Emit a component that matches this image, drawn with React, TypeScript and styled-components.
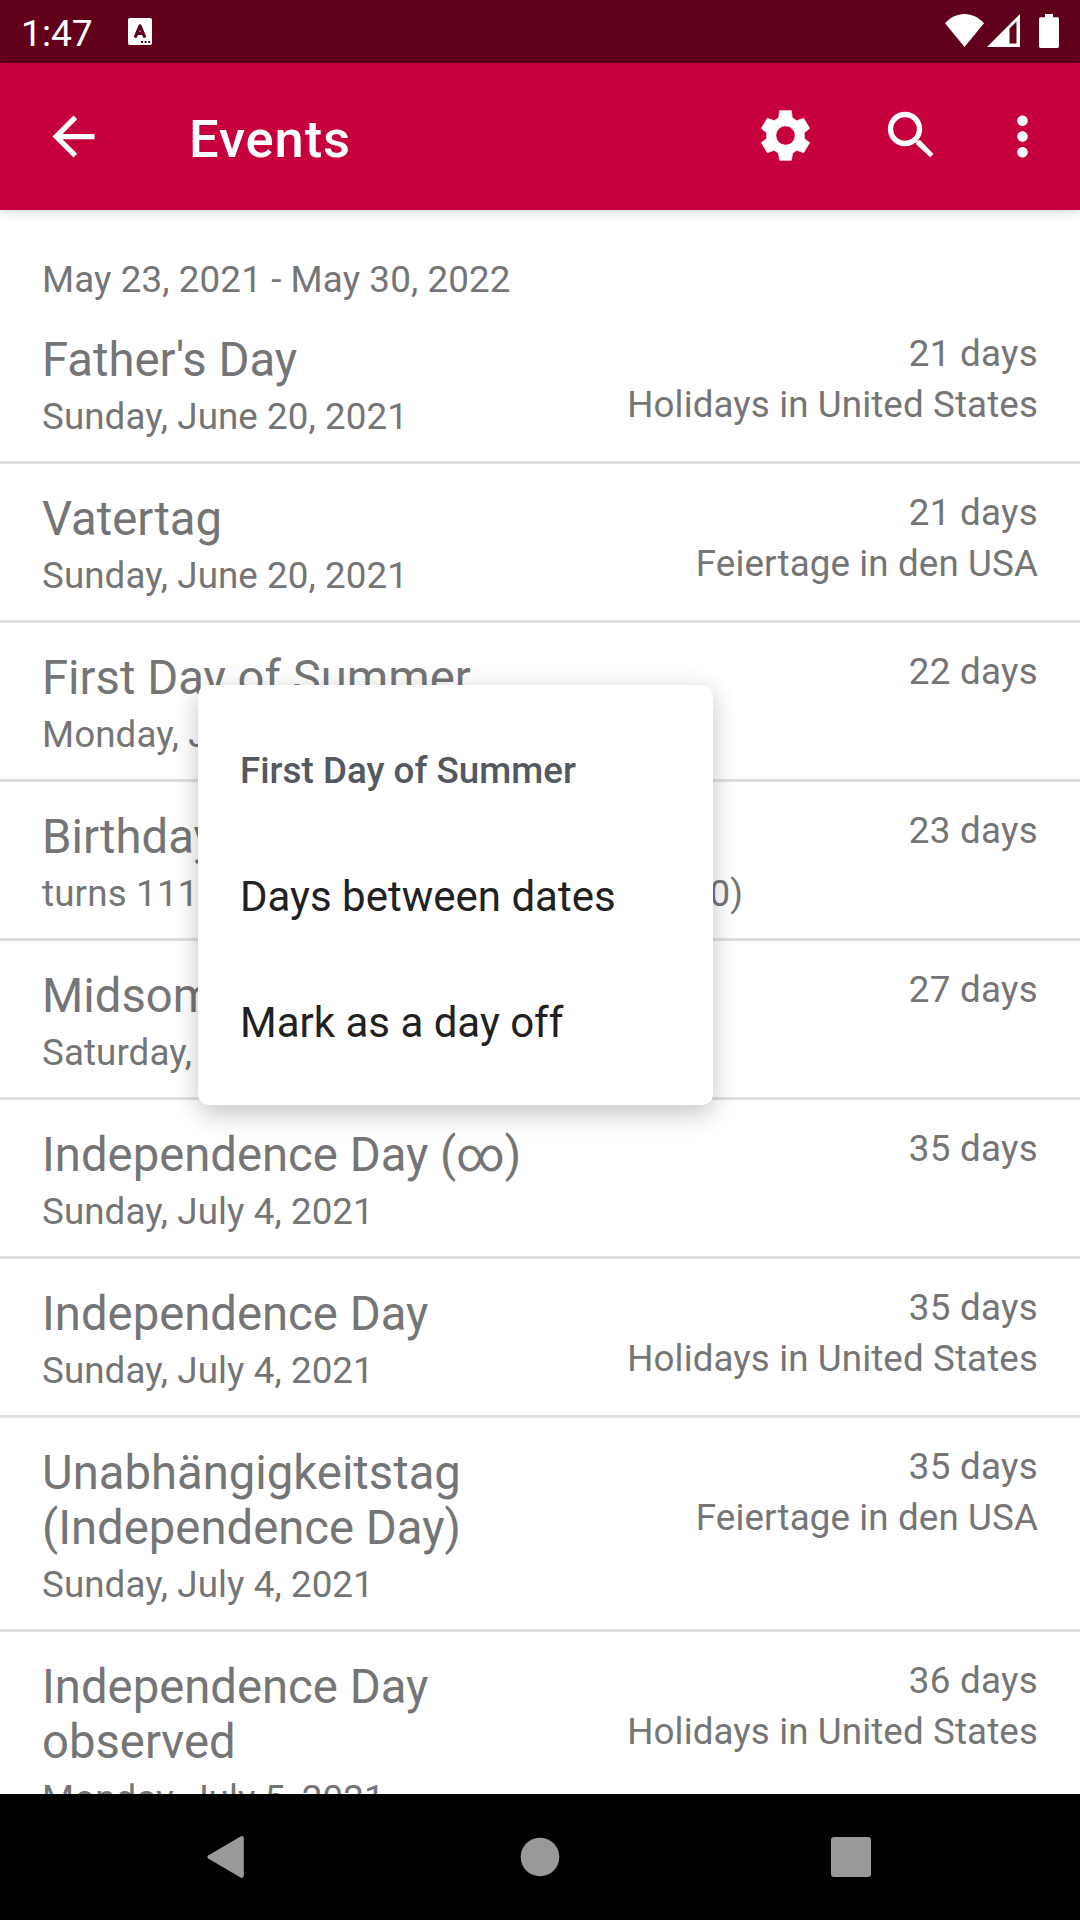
import React from "react";
import styled, { createGlobalStyle } from "styled-components";

const GlobalStyle = createGlobalStyle`
  html, body { margin: 0; padding: 0; background: #fff; }
  *, *::before, *::after { box-sizing: border-box; }
`;

const Screen = styled.div`
  position: relative;
  display: flex;
  flex-direction: column;
  width: 1080px;
  height: 1920px;
  overflow: hidden;
  background: #fff;
  font-family: Roboto, "Liberation Sans", sans-serif;
`;

const StatusBar = styled.div`
  display: flex;
  align-items: flex-start;
  flex: none;
  height: 63px;
  padding: 0 21px 0 21px;
  background: #61001b;
  color: #fff;
`;

const Clock = styled.span`
  width: 107px;
  padding-top: 12px;
  font-size: 37.2px;
  line-height: 43px;
`;

const StatusIcons = styled.div`
  display: flex;
  margin-left: auto;
`;

const Glyph = styled.svg<{ $top?: number; $left?: number }>`
  display: block;
  flex: none;
  margin-top: ${(p) => p.$top ?? 0}px;
  margin-left: ${(p) => p.$left ?? 0}px;
`;

const Toolbar = styled.header`
  position: relative;
  z-index: 1;
  display: flex;
  align-items: center;
  flex: none;
  height: 147px;
  padding: 0 26px 0 42px;
  background: #c5003d;
  color: #fff;
  box-shadow: 0 3px 10px rgba(0, 0, 0, 0.12), 0 0 3px rgba(0, 0, 0, 0.08);
`;

const ToolbarTitle = styled.h1`
  flex: 1;
  margin: 0 0 0 84px;
  padding-top: 4px;
  font-size: 52.5px;
  font-weight: 500;
  line-height: 62px;
  letter-spacing: 0.9px;
`;

const Content = styled.main`
  flex: 1;
  min-height: 0;
  overflow: hidden;
  color: #757575;
`;

const Range = styled.div`
  height: 95px;
  padding: 48px 42px 0;
  font-size: 36.75px;
  line-height: 43px;
  letter-spacing: 0.11px;
`;

const Row = styled.div`
  display: flex;
  justify-content: space-between;
  gap: 42px;
  padding: 28px 42px 23px;
  border-bottom: 3px solid #e0e0e0;
`;

const Main = styled.div`
  flex: 1;
`;

const Title = styled.div`
  font-size: 47.25px;
  line-height: 55px;
`;

const Detail = styled.div<{ $wide?: boolean }>`
  margin-top: 7px;
  font-size: 36.75px;
  line-height: 43px;
  letter-spacing: ${(p) => (p.$wide ? 0.16 : 0.08)}px;
  white-space: nowrap;
`;

const Side = styled.div`
  display: flex;
  flex-direction: column;
  gap: 8px;
  margin-top: -1px;
  text-align: right;
  font-size: 36.75px;
  line-height: 43px;
  letter-spacing: 0.11px;
  white-space: nowrap;
`;

const Days = styled.span`
  letter-spacing: 0.3px;
`;

const Menu = styled.div`
  position: absolute;
  z-index: 2;
  left: 198px;
  top: 685px;
  width: 515px;
  height: 420px;
  padding: 21px 0;
  border-radius: 10.5px;
  background: #fff;
  box-shadow: 0 11px 26px rgba(0, 0, 0, 0.17), 0 0 24px rgba(0, 0, 0, 0.08);
`;

const MenuItem = styled.div<{ $header?: boolean }>`
  display: flex;
  align-items: center;
  height: 126px;
  padding: 3px 42px 0;
  font-size: ${(p) => (p.$header ? 36.75 : 42)}px;
  font-weight: ${(p) => (p.$header ? 500 : 400)};
  color: ${(p) => (p.$header ? "#54585f" : "#212121")};
`;

const NavBar = styled.nav`
  display: grid;
  grid-template-columns: 385px 310px 385px;
  align-items: center;
  flex: none;
  height: 126px;
  background: #000;
`;

const NavButton = styled.div<{ $shift?: number }>`
  display: flex;
  justify-content: center;
  padding-left: ${(p) => Math.max(p.$shift ?? 0, 0)}px;
  padding-right: ${(p) => Math.max(-(p.$shift ?? 0), 0)}px;
`;

interface EventItem {
  title: string;
  detail: string;
  days: string;
  calendar?: string;
}

const events: EventItem[] = [
  { title: "Father's Day", detail: "Sunday, June 20, 2021", days: "21 days", calendar: "Holidays in United States" },
  { title: "Vatertag", detail: "Sunday, June 20, 2021", days: "21 days", calendar: "Feiertage in den USA" },
  { title: "First Day of Summer", detail: "Monday, June 21, 2021", days: "22 days" },
  { title: "Birthday", detail: "turns 111 – Tuesday, June 22, 2021 (1910)", days: "23 days" },
  { title: "Midsommar", detail: "Saturday, June 26, 2021", days: "27 days" },
  { title: "Independence Day (∞)", detail: "Sunday, July 4, 2021", days: "35 days" },
  { title: "Independence Day", detail: "Sunday, July 4, 2021", days: "35 days", calendar: "Holidays in United States" },
  { title: "Unabhängigkeitstag (Independence Day)", detail: "Sunday, July 4, 2021", days: "35 days", calendar: "Feiertage in den USA" },
  { title: "Independence Day observed", detail: "Monday, July 5, 2021", days: "36 days", calendar: "Holidays in United States" },
];

export default function App() {
  return (
    <>
      <GlobalStyle />
      <Screen>
        <StatusBar>
          <Clock>1:47</Clock>
          <Glyph $top={18} width="24" height="27" viewBox="0 0 24 27">
            <rect width="24" height="27" rx="2" fill="#fff" />
            <path d="M7.6 18.3L12 7.8L16.4 18.3M9 15.3H15" fill="none" stroke="#61001b" strokeWidth="3.2" strokeLinejoin="round" strokeLinecap="round" />
            <path d="M13 23h2v2h-2zM16.6 23h2v2h-2zM20.2 23h2v2h-2z" fill="#61001b" />
          </Glyph>
          <StatusIcons>
            <Glyph $top={14} width="39" height="33" viewBox="0 0 39 33" fill="#fff">
              <path d="M19.5 33L0 9.3C5 3.6 12 0 19.5 0S34 3.6 39 9.3Z" />
            </Glyph>
            <Glyph $top={14} $left={3} width="33" height="33" viewBox="0 0 33 33" fill="#fff">
              <path fillRule="evenodd" d="M0 33L33 0V33ZM22.5 14.5V29.5H29.5V7.5Z" />
            </Glyph>
            <Glyph $top={14} $left={19} width="20" height="34" viewBox="0 0 20 34" fill="#fff">
              <path d="M6 0H14V3.3H18.5Q20 3.3 20 5V32Q20 34 18.5 34H1.5Q0 34 0 32V5Q0 3.3 1.5 3.3H6Z" />
            </Glyph>
          </StatusIcons>
        </StatusBar>
        <Toolbar>
          <Glyph width="63" height="63" viewBox="0 0 24 24" fill="#fff">
            <path d="M20 11H7.83l5.59-5.59L12 4l-8 8 8 8 1.41-1.41L7.83 13H20v-2z" />
          </Glyph>
          <ToolbarTitle>Events</ToolbarTitle>
          <Glyph width="63" height="63" viewBox="42 30 189 189" fill="#fff">
            <path
              fillRule="evenodd"
              stroke="#fff"
              strokeWidth="2"
              strokeLinejoin="round"
              d="M119 47H154L157 69Q164 72 170 77L191 70L209 100L193 113V131L209 143L191 173L170 166Q164 171 158 174L154 196H119L115 174Q109 171 103 166L82 173L64 143L80 131V113L64 100L82 70L103 77Q109 72 116 69ZM136.500 92.500A29 29 0 1 0 136.500 150.500A29 29 0 1 0 136.500 92.500Z"
            />
          </Glyph>
          <Glyph $left={63} width="63" height="63" viewBox="420 30 189 189" fill="#fff">
            <circle cx="495" cy="102" r="43.500" fill="none" stroke="#fff" strokeWidth="16" />
            <path d="M528 148L530 139L540 135L580.500 177L571 187Z" />
          </Glyph>
          <Glyph $left={48} width="63" height="63" viewBox="0 0 24 24" fill="#fff">
            <path d="M12 8c1.1 0 2-.9 2-2s-.9-2-2-2-2 .9-2 2 .9 2 2 2zm0 2c-1.1 0-2 .9-2 2s.9 2 2 2 2-.9 2-2-.9-2-2-2zm0 6c-1.1 0-2 .9-2 2s.9 2 2 2 2-.9 2-2-.9-2-2-2z" />
          </Glyph>
        </Toolbar>
        <Content>
          <Range>May 23, 2021 - May 30, 2022</Range>
          {events.map((e) => (
            <Row key={e.title}>
              <Main>
                <Title>{e.title}</Title>
                <Detail $wide={e.detail.length > 30}>{e.detail}</Detail>
              </Main>
              <Side>
                <Days>{e.days}</Days>
                {e.calendar && <span>{e.calendar}</span>}
              </Side>
            </Row>
          ))}
        </Content>
        <NavBar>
          <NavButton $shift={66}>
            <Glyph width="37" height="42" viewBox="0 0 37 42" fill="#999">
              <path d="M33.5 .4Q36.800-.8 36.800 2.500V39.500Q36.800 42.800 33.500 41.600L1.200 22.500Q-.4 21 1.200 19.500Z" />
            </Glyph>
          </NavButton>
          <NavButton>
            <Glyph width="40" height="40" viewBox="0 0 40 40" fill="#999">
              <circle cx="20" cy="20" r="19.3" />
            </Glyph>
          </NavButton>
          <NavButton $shift={-73}>
            <Glyph width="40" height="40" viewBox="0 0 40 40" fill="#999">
              <rect width="40" height="40" rx="3" />
            </Glyph>
          </NavButton>
        </NavBar>
        <Menu>
          <MenuItem $header>First Day of Summer</MenuItem>
          <MenuItem>Days between dates</MenuItem>
          <MenuItem>Mark as a day off</MenuItem>
        </Menu>
      </Screen>
    </>
  );
}
